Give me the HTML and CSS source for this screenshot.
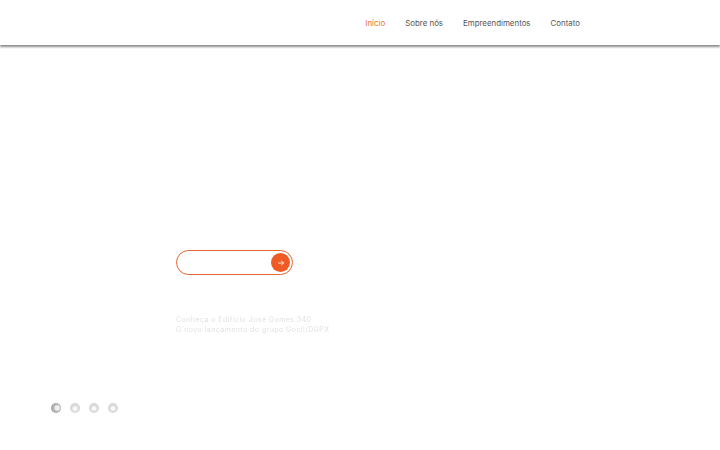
FILE: index.html
```html
<!DOCTYPE html>
<html lang="pt-BR">
<head>
    <meta charset="UTF-8">
    <meta name="viewport" content="width=device-width, initial-scale=1.0">
    <title>Início</title>
    <link rel="stylesheet" href="styles.css">
</head>
<body>
    <header class="topo">
        <nav class="menu">
            <a href="#" class="ativo">Início</a>
            <a href="#">Sobre nós</a>
            <a href="#">Empreendimentos</a>
            <a href="#">Contato</a>
        </nav>
    </header>

    <section class="hero">
        <form class="busca">
            <input type="text" class="busca-campo" aria-label="Buscar">
            <button type="button" class="busca-btn" aria-label="Enviar">
                <svg width="8" height="8" viewBox="0 0 8 8"><path d="M1.5 4h5M4.5 2L6.5 4 4.5 6" fill="none" stroke="#fff" stroke-width="0.8" stroke-linecap="round" stroke-linejoin="round"/></svg>
            </button>
        </form>

        <p class="chamada">
            Conheça o Edifício José Gomes 340<br>
            O novo lançamento do grupo Gocil/DGPX
        </p>
    </section>

    <ul class="pontos">
        <li class="atual"></li>
        <li></li>
        <li></li>
        <li></li>
    </ul>
</body>
</html>
```

FILE: styles.css
```css
*{padding:0;margin:0;box-sizing:border-box;}

body{
    font-family:Inter, "Noto Sans", sans-serif;
    background:#fff;
    color:#333;
}

ul, li{list-style:none;}
a{text-decoration:none;color:#555;}

/* topo */
.topo{
    height:45px;
    display:flex;
    justify-content:flex-end;
    align-items:center;
    padding-right:140px;
    background:#fff;
    box-shadow:0 2px 2px rgba(0,0,0,.45);
    position:relative;
}
.menu{
    display:flex;
    gap:20px;
    font-size:7.9px;
    padding-top:1px;
}
.menu a.ativo{color:#e8732e;}

/* hero */
.hero{
    padding:205px 0 0 176px;
}
.busca{
    width:117px;height:25px;
    border:1.5px solid #e8632e;
    border-radius:13px;
    display:flex;
    align-items:center;
    padding:0 2px 0 10px;
}
.busca-campo{
    flex:1;
    min-width:0;
    border:0;
    outline:0;
    background:transparent;
}
.busca-btn{
    width:19px;height:19px;
    border:0;
    border-radius:50%;
    background:#f05a24;
    display:flex;
    align-items:center;
    justify-content:center;
}
.chamada{
    margin-top:40px;
    font-size:7px;
    line-height:10px;
    letter-spacing:.45px;
    color:#e2e2e2;
    filter:blur(.3px);
}

/* pontos do slide */
.pontos{
    display:flex;
    gap:9px;
    padding:68px 0 0 51px;
}
.pontos li{
    width:10px;height:10px;
    border-radius:50%;
    background:radial-gradient(circle at 50% 55%, #fafafa 0 1.5px, #dcdcdc 3px, #d2d2d2 100%);
}
.pontos li.atual{
    background:radial-gradient(circle at 62% 50%, #f0f0f0 0 2px, #b5b5b5 3.5px, #9a9a9a 100%);
}
```
